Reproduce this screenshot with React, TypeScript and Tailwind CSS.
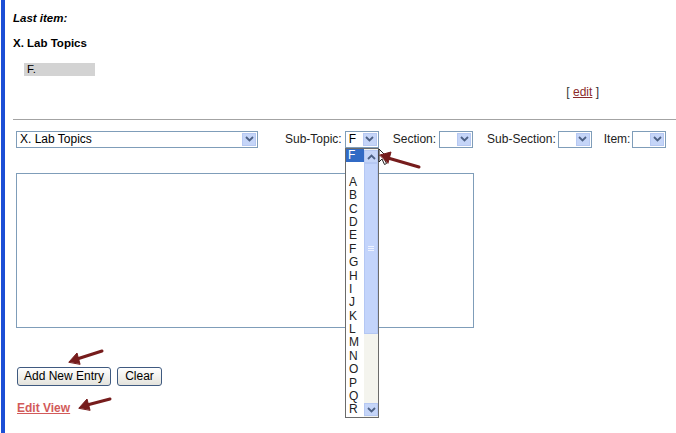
import React from "react";

const Chevron = ({ up = false }: { up?: boolean }) => (
  <svg width="9" height="6" viewBox="0 0 9 6" className="block">
    <path
      d={up ? "M1 5 L4.5 1.5 L8 5" : "M1 1 L4.5 4.5 L8 1"}
      fill="none"
      stroke="#4d6185"
      strokeWidth="1.8"
    />
  </svg>
);

const ArrowBtn = () => (
  <div className="w-[14px] h-[13px] my-[1px] mr-[1px] bg-[#c5d5f8] border border-[#b6c8f2] flex items-center justify-center shrink-0">
    <Chevron />
  </div>
);

const Select = ({ w, text }: { w: string; text?: string }) => (
  <div className={`${w} h-[17px] shrink-0 border border-[#7f9db9] bg-white flex items-stretch`}>
    <div className="flex-1 pl-[3px] text-[12px] leading-[15px] text-black overflow-hidden whitespace-nowrap">
      {text}
    </div>
    <ArrowBtn />
  </div>
);

const letters = ["A", "B", "C", "D", "E", "F", "G", "H", "I", "J", "K", "L", "M", "N", "O", "P", "Q", "R"];

export default function App() {
  return (
    <div
      className="relative w-[676px] h-[433px] bg-white flex overflow-hidden text-black"
      style={{ fontFamily: '"Liberation Sans", Arial, sans-serif' }}
    >
      <div className="w-[4px] ml-[1px] bg-[#1c4fd6] shrink-0" />
      <div className="flex-1 flex flex-col pl-[8px]">
        <div className="mt-[11px] text-[11.5px] leading-[14px] font-bold italic">Last item:</div>
        <div className="mt-[11px] text-[11.5px] leading-[14px] font-bold">X. Lab Topics</div>
        <div className="mt-[13px] ml-[11px] w-[71px] h-[13px] bg-[#d3d3d3] pl-[3px] text-[11.5px] leading-[13px] text-black">
          F.
        </div>
        <div className="mt-[9px] pr-[77px] text-right text-[12px] leading-[14px] text-[#333]">
          [ <span className="underline text-[#8b2a2a]">edit</span> ]
        </div>
        <div className="mt-[20px] border-t border-[#a3a3a3]" />
        <div className="mt-[10px] ml-[3px] flex items-center text-[12px] text-[#222] whitespace-nowrap">
          <Select w="w-[242px]" text="X. Lab Topics" />
          <span className="ml-[27px] shrink-0">Sub-Topic:</span>
          <div className="ml-[3px] shrink-0">
            <Select w="w-[34px]" text="F" />
          </div>
          <span className="ml-[14px] shrink-0">Section:</span>
          <div className="ml-[3px] shrink-0">
            <Select w="w-[34px]" />
          </div>
          <span className="ml-[14px] shrink-0">Sub-Section:</span>
          <div className="ml-[2px] shrink-0">
            <Select w="w-[34px]" />
          </div>
          <span className="ml-[12px] shrink-0">Item:</span>
          <div className="ml-[2px] shrink-0">
            <Select w="w-[34px]" />
          </div>
        </div>
        <div className="mt-[25px] ml-[3px] w-[458px] h-[155px] border border-[#7f9db9] bg-white" />
        <div className="mt-[39px] ml-[4px] flex gap-[6px]">
          <button className="w-[94px] h-[19px] rounded-[3px] border border-[#3f5a80] bg-gradient-to-b from-white to-[#e4e3dc] text-[12px] leading-[17px] text-black">
            Add New Entry
          </button>
          <button className="w-[45px] h-[19px] rounded-[3px] border border-[#3f5a80] bg-gradient-to-b from-white to-[#e4e3dc] text-[12px] leading-[17px] text-black">
            Clear
          </button>
        </div>
        <div className="mt-[15px] ml-[4px] text-[12px] leading-[14px] font-bold underline text-[#d25a5a]">
          Edit View
        </div>
      </div>

      {/* open dropdown list */}
      <div className="absolute left-[345px] top-[148px] w-[34px] h-[270px] border border-[#6b6b6b] bg-white flex">
        <div className="flex-1 flex flex-col text-[12px] leading-[13.4px]">
          <div className="bg-[#316ac5] text-white pl-[2px] h-[13.4px]">F</div>
          <div className="h-[13.4px]" />
          {letters.map((l) => (
            <div key={l} className="pl-[3px] h-[13.4px] text-[#222]">
              {l}
            </div>
          ))}
        </div>
        <div className="w-[14px] bg-[#f4f4ee] flex flex-col">
          <div className="h-[13px] mt-[1px] bg-[#c5d5f8] border border-[#b6c8f2] flex items-center justify-center">
            <Chevron up />
          </div>
          <div className="h-[171px] bg-[#c3d4fb] border border-[#b4c7f3] flex items-center justify-center">
            <div className="w-[6px] flex flex-col gap-[1px]">
              <div className="h-px bg-[#eef3ff]" />
              <div className="h-px bg-[#eef3ff]" />
              <div className="h-px bg-[#eef3ff]" />
            </div>
          </div>
          <div className="flex-1" />
          <div className="h-[13px] mb-[1px] bg-[#c5d5f8] border border-[#b6c8f2] flex items-center justify-center">
            <Chevron />
          </div>
        </div>
      </div>

      {/* cursor */}
      <svg className="absolute left-[378px] top-[148px] pointer-events-none" width="12" height="18" viewBox="0 0 12 18">
        <path d="M1 1 L1 14 L4 11 L6.5 16.5 L8.5 15.5 L6 10 L10 10 Z" fill="white" stroke="#222" strokeWidth="1" />
      </svg>

      {/* annotation arrows */}
      <svg className="absolute left-0 top-0 pointer-events-none" width="676" height="433" viewBox="0 0 676 433">
        <g stroke="#761c1c" strokeWidth="3" strokeLinecap="round" fill="#761c1c">
          <line x1="419" y1="167" x2="388" y2="158" />
          <path d="M380 155 L391 152 L388 163 Z" strokeWidth="1" />
          <line x1="102" y1="351" x2="77" y2="359" />
          <path d="M69 362 L77 353 L80 364 Z" strokeWidth="1" />
          <line x1="110" y1="399" x2="87" y2="405" />
          <path d="M79 408 L87 399 L90 410 Z" strokeWidth="1" />
        </g>
      </svg>
    </div>
  );
}
